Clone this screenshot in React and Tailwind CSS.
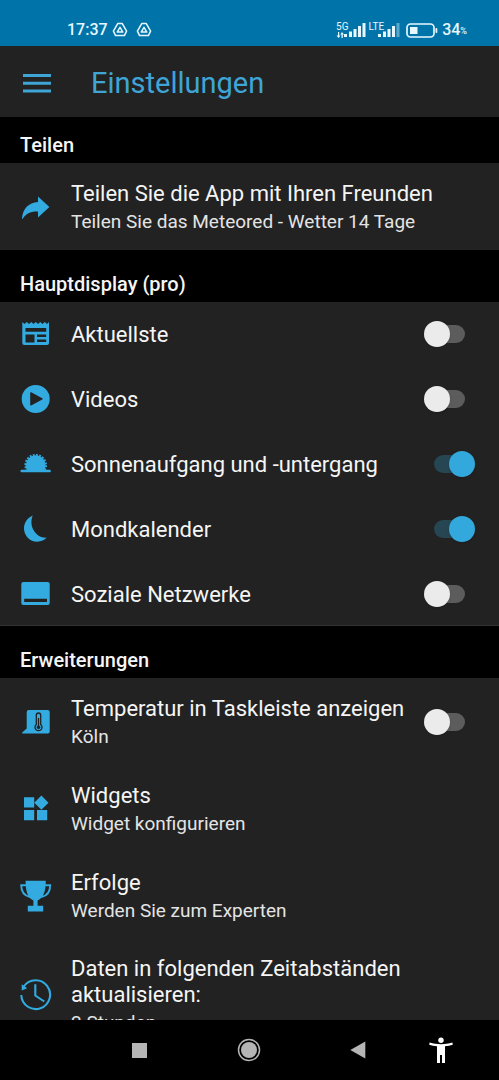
// App.jsx
import { useState } from 'react'

const svgProps = {
  className: 'w-8 h-8 shrink-0 text-[#33aae0]',
  viewBox: '0 0 32 32',
  fill: 'currentColor',
  'aria-hidden': true,
}

function ShareIcon() {
  return (
    <svg {...svgProps}>
      <path d="M18 5.5 29.4 16 18 26.4V20.6C10.5 20.3 6 22.6 3 27.6c-.3.5-1 .3-1-.3C2.600 18 8.500 11.500 18 11Z" />
    </svg>
  )
}

function NewsIcon() {
  return (
    <svg {...svgProps}>
      <path
        fillRule="evenodd"
        d="M2.300 4 4.500 6 6.800 4 9 6l2.300-2 2.200 2 2.300-2L18 6l2.300-2 2.200 2 2.300-2L27 6l2-2v21a2 2 0 0 1-2 2H4.300a2 2 0 0 1-2-2ZM5.500 10v3.800h20.700V10ZM5.500 16.600v7.800h9v-7.800ZM17 16.600v2.400h9.200v-2.400ZM17 21.500v2.600h9.200v-2.600Z"
      />
    </svg>
  )
}

function VideoIcon() {
  return (
    <svg {...svgProps}>
      <path fillRule="evenodd" d="M15.700 2a14 14 0 1 0 0 28 14 14 0 0 0 0-28ZM10.200 9.800c0-.6.5-.8 1-.6l11 6c.6.300.6.9 0 1.200l-11 6c-.5.300-1 0-1-.6Z" />
    </svg>
  )
}

function SunIcon() {
  return (
    <svg {...svgProps}>
      <defs>
        <clipPath id="horizon">
          <rect width="32" height="23" />
        </clipPath>
      </defs>
      <g clipPath="url(#horizon)">
        <circle cx="15.700" cy="17.200" r="10" />
        <circle cx="15.700" cy="17.200" r="10.400" fill="none" stroke="currentColor" strokeWidth="1.800" strokeDasharray="1.900 1.367" />
      </g>
      <rect x=".5" y="21.700" width="30.300" height="2.500" rx="1" />
    </svg>
  )
}

function MoonIcon() {
  return (
    <svg {...svgProps}>
      <path d="M12.700 2.500C6.500 5.400 4 10.500 4 15.400 4 22.500 9.800 28.700 17.200 28.700c4 0 7.400-1.600 9.500-4.100C18 25.800 7.800 15 12.700 2.500Z" />
    </svg>
  )
}

function SocialIcon() {
  return (
    <svg {...svgProps}>
      <path fillRule="evenodd" d="M3.300 4h24.400a2 2 0 0 1 2 2v19a2 2 0 0 1-2 2H3.300a2 2 0 0 1-2-2V6a2 2 0 0 1 2-2ZM4.200 20.700V24H27v-3.300Z" />
    </svg>
  )
}

function TemperatureIcon() {
  return (
    <svg {...svgProps}>
      <path d="M8.700 4h19a2 2 0 0 1 2 2v19.500a2 2 0 0 1-2 2H2.500c-.6 0-.8-.5-.3-.9l4.500-4V6a2 2 0 0 1 2-2Z" />
      <g className="text-[#222222]" stroke="currentColor" fill="none">
        <path strokeWidth="1.300" d="M16.300 18.500V9.200a2.200 2.200 0 0 1 4.400 0v9.300a3.500 3.500 0 1 1-4.400 0Z" />
        <path strokeWidth="1.300" d="M18.500 12v8" />
        <circle cx="18.500" cy="21.300" r="1.400" fill="currentColor" />
      </g>
    </svg>
  )
}

function WidgetsIcon() {
  return (
    <svg {...svgProps}>
      <path d="M4 4.200h10.200v10.200H4ZM4 17h10.200v10.200H4ZM17 17h10.200v10.200H17ZM21.400 2.600l7.100 7.100-7.100 7.100-7.100-7.100Z" />
    </svg>
  )
}

function TrophyIcon() {
  return (
    <svg {...svgProps}>
      <path d="M5.600.700h20.200c0 10-2 17-8.200 19.800v5.200h5.600v5.700H7.800v-5.700h5.600v-5.200C7.500 17.700 5.600 11 5.600.700Z" />
      <path fill="none" stroke="currentColor" strokeWidth="1.900" d="M6 5.300H1.200C1.200 12 4.300 15.800 10 17M25.200 5.300h5C30.200 12 27 15.800 21.500 17" />
    </svg>
  )
}

function HistoryIcon() {
  return (
    <svg {...svgProps}>
      <path fill="none" stroke="currentColor" strokeWidth="2.100" d="M1.300 16A14.400 14.400 0 1 0 3.800 7.500" />
      <path d="M1.700 5.300v6.200l5.500-2.200-1.700-1.200Z" />
      <path fill="none" stroke="currentColor" strokeWidth="2.100" d="M15.300 5.300v11.200l9 6" />
    </svg>
  )
}

function DriveIcon() {
  return (
    <svg className="w-4 h-4" viewBox="0 0 16 16" fill="none" stroke="currentColor" strokeWidth="1.500" strokeLinejoin="round" aria-hidden="true">
      <path d="M5.700 1.600h4.600l4.300 7.600-2.200 4.400H3.600L1.400 9.200Z" />
      <path d="m8 5.300 2.800 4.800H5.200Z" />
    </svg>
  )
}

function SignalBars({ weak }) {
  return (
    <svg className="w-[22px] h-4" viewBox="0 0 22 16" fill="currentColor" aria-hidden="true">
      <path d="M0 12h3v3H0ZM5 9.500h3V15H5ZM9.500 7h3v8h-3ZM14 4h3v11h-3Z" />
      <path opacity={weak ? 0.4 : 1} d="M18.500 1h3v14h-3Z" />
    </svg>
  )
}

function StatusBar() {
  return (
    <div className="shrink-0 h-[46px] pt-[14px] pl-[67px] pr-8 flex items-center justify-between bg-[#0074a8] text-[#e6f7ff]">
      <div className="flex items-center gap-1">
        <span className="text-base font-medium">17:37</span>
        <span className="flex gap-2">
          <DriveIcon />
          <DriveIcon />
        </span>
      </div>
      <div className="flex items-center">
        <div className="flex flex-col items-start">
          <span className="text-[10px] leading-[10px]">5G</span>
          <svg className="w-2 h-[6px]" viewBox="0 0 8 6" fill="currentColor" aria-hidden="true">
            <path d="M2 0h1.200v3.500h1.300L2.600 6 .5 3.500H2ZM5.500 6V2.500H4.300L6 0l2 2.500H6.800V6Z" />
          </svg>
        </div>
        <div className="-ml-1 mr-[2px]">
          <SignalBars />
        </div>
        <span className="text-[10px] leading-[10px] self-start pt-1">LTE</span>
        <div className="-ml-[6px] mr-[6px]">
          <SignalBars weak />
        </div>
        <svg className="w-8 h-[15px] mr-1" viewBox="0 0 32 15" aria-hidden="true">
          <rect x="1" y="1" width="27" height="13" rx="3.500" fill="none" stroke="currentColor" strokeWidth="1.700" />
          <rect x="4" y="4" width="7.500" height="7" fill="currentColor" />
          <rect x="29.500" y="5" width="1.800" height="5" rx=".8" fill="currentColor" />
        </svg>
        <span className="text-base font-medium">34</span>
        <span className="text-[9px] font-medium pt-1">%</span>
      </div>
    </div>
  )
}

function Header() {
  return (
    <header className="shrink-0 h-[71px] pt-[2px] pl-[23px] flex items-center gap-10 bg-[#222222] text-[#3fa5d6]">
      <button type="button" aria-label="Menü">
        <svg className="w-7 h-5" viewBox="0 0 28 20" fill="currentColor" aria-hidden="true">
          <path d="M0 1h28v3H0ZM0 8.700h28v3H0ZM0 16.500h28v3H0Z" />
        </svg>
      </button>
      <h1 className="text-[29px] leading-8">Einstellungen</h1>
    </header>
  )
}

function SectionTitle({ first, children }) {
  return (
    <h2 className={`px-5 pb-1 text-[20px] leading-7 font-medium ${first ? 'pt-[14px]' : 'pt-5'}`}>
      {children}
    </h2>
  )
}

function RowText({ title, subtitle }) {
  return (
    <span className="flex-1 flex flex-col gap-[2px] pt-[2px]">
      <span className="text-[22px] leading-[26px]">{title}</span>
      {subtitle && <span className="text-[19px] leading-[26px] text-[#e4e4e4]">{subtitle}</span>}
    </span>
  )
}

function LinkRow({ icon, title, subtitle }) {
  return (
    <button type="button" className="w-full min-h-[87px] py-[15px] pl-5 pr-6 flex items-center gap-[19px] text-left">
      {icon}
      <RowText title={title} subtitle={subtitle} />
    </button>
  )
}

function SwitchRow({ icon, title, subtitle, defaultOn = false }) {
  const [on, setOn] = useState(defaultOn)

  return (
    <label className={`pl-5 pr-6 flex items-center gap-[19px] ${subtitle ? 'min-h-[87px] py-[15px]' : 'h-16'}`}>
      {icon}
      <RowText title={title} subtitle={subtitle} />
      <input
        type="checkbox"
        role="switch"
        checked={on}
        onChange={(e) => setOn(e.target.checked)}
        className="relative shrink-0 appearance-none w-[51px] h-[26px] before:absolute before:inset-x-[10px] before:inset-y-1 before:rounded-full before:bg-[#5c5c5c] checked:before:bg-[#264653] after:absolute after:top-0 after:left-0 after:size-[26px] after:rounded-full after:bg-[#ebebeb] after:shadow-sm checked:after:left-[25px] checked:after:bg-[#33a8dd]"
      />
    </label>
  )
}

function NavBar() {
  return (
    <nav className="shrink-0 h-[60px] grid grid-cols-[85fr_109fr_109fr_109fr_58fr_29fr] items-center justify-items-center bg-black text-[#b5b5b5]">
      <button type="button" aria-label="Letzte Apps" className="col-start-2">
        <span className="block size-[15px] bg-current" />
      </button>
      <button type="button" aria-label="Startseite">
        <svg className="w-6 h-6" viewBox="0 0 24 24" aria-hidden="true">
          <circle cx="12" cy="12" r="10.500" fill="none" stroke="currentColor" strokeWidth="1.500" />
          <circle cx="12" cy="12" r="8" fill="currentColor" />
        </svg>
      </button>
      <button type="button" aria-label="Zurück">
        <svg className="w-4 h-[18px]" viewBox="0 0 16 18" fill="currentColor" aria-hidden="true">
          <path d="M15.300.500v17L.3 9Z" />
        </svg>
      </button>
      <button type="button" aria-label="Bedienungshilfen" className="text-white">
        <svg className="w-6 h-[27px]" viewBox="0 0 24 27" fill="currentColor" aria-hidden="true">
          <circle cx="12" cy="3.300" r="2.700" />
          <path d="M.6 5.600C8 7.800 16 7.800 23.400 5.600l.4 2.200c-2.600.8-5 1.200-7.800 1.500V26h-3v-8h-2v8H8V9.300C5.200 9 2.800 8.600.2 7.800Z" />
        </svg>
      </button>
    </nav>
  )
}

export default function App() {
  return (
    <div className="h-screen flex flex-col bg-black text-[#f5f5f5] font-[Roboto,'Noto_Sans',sans-serif]">
      <StatusBar />
      <Header />

      <main className="flex-1 min-h-0 overflow-hidden">
        {/* Teilen */}
        <section>
          <SectionTitle first>Teilen</SectionTitle>
          <div className="bg-[#222222]">
            <LinkRow icon={<ShareIcon />} title="Teilen Sie die App mit Ihren Freunden" subtitle="Teilen Sie das Meteored - Wetter 14 Tage" />
          </div>
        </section>

        {/* Hauptdisplay */}
        <section>
          <SectionTitle>Hauptdisplay (pro)</SectionTitle>
          <div className="flex flex-col gap-px bg-[#222222] shadow-[inset_0_-1px_#333333]">
            <SwitchRow icon={<NewsIcon />} title="Aktuellste" />
            <SwitchRow icon={<VideoIcon />} title="Videos" />
            <SwitchRow icon={<SunIcon />} title="Sonnenaufgang und -untergang" defaultOn />
            <SwitchRow icon={<MoonIcon />} title="Mondkalender" defaultOn />
            <SwitchRow icon={<SocialIcon />} title="Soziale Netzwerke" />
          </div>
        </section>

        {/* Erweiterungen */}
        <section>
          <SectionTitle>Erweiterungen</SectionTitle>
          <div className="bg-[#222222]">
            <SwitchRow icon={<TemperatureIcon />} title="Temperatur in Taskleiste anzeigen" subtitle="Köln" />
            <LinkRow icon={<WidgetsIcon />} title="Widgets" subtitle="Widget konfigurieren" />
            <LinkRow icon={<TrophyIcon />} title="Erfolge" subtitle="Werden Sie zum Experten" />
            <LinkRow icon={<HistoryIcon />} title="Daten in folgenden Zeitabständen aktualisieren:" subtitle="2 Stunden" />
          </div>
        </section>
      </main>

      <NavBar />
    </div>
  )
}
